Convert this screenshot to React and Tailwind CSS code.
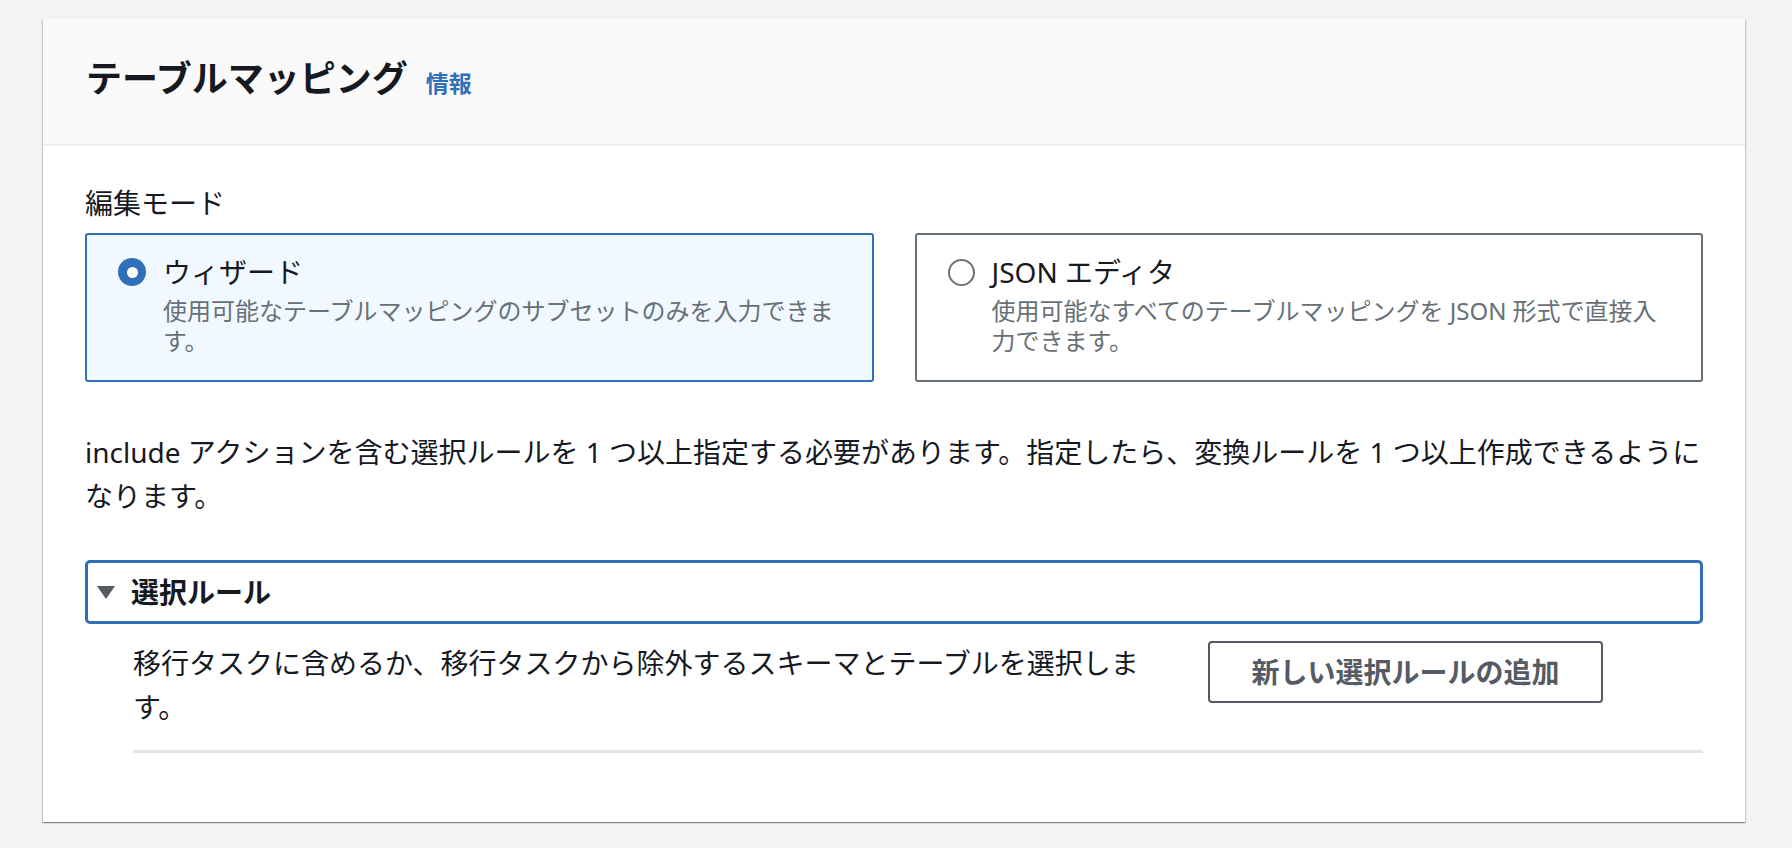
import { useState } from 'react'

const font = { fontFamily: '"Noto Sans", "Noto Sans CJK JP", sans-serif' }

function RadioDot({ checked }) {
  return checked ? (
    <span className="flex h-[28px] w-[28px] shrink-0 items-center justify-center rounded-full bg-[#3070b6]">
      <span className="h-[11px] w-[11px] rounded-full bg-white" />
    </span>
  ) : (
    <span className="h-[27px] w-[27px] shrink-0 rounded-full border-2 border-[#687078] bg-white" />
  )
}

function ModeCard({ checked, label, desc, onClick }) {
  return (
    <button
      onClick={onClick}
      className={`flex h-[149px] items-start rounded-[3px] border-2 pl-[31px] pr-[20px] pt-[16px] text-left ${
        checked ? 'border-[#3070b6] bg-[#f1f8ff]' : 'border-[#687078] bg-white'
      }`}
    >
      <span className="flex h-[42px] items-center">
        <RadioDot checked={checked} />
      </span>
      <span className="ml-[17px] flex flex-col">
        <span className="text-[28px] leading-[42px] text-[#16191f]">{label}</span>
        <span className="mt-[3px] text-[24px] leading-[30px] text-[#687078]">{desc}</span>
      </span>
    </button>
  )
}

export default function App() {
  const [mode, setMode] = useState('wizard')
  const [open, setOpen] = useState(true)

  return (
    <div className="min-h-screen bg-[#f2f3f3] pt-[19px]" style={font}>
      <div className="ml-[43px] w-[1702px] bg-white shadow-[0_1px_1px_0_rgba(0,28,36,0.3),1px_1px_1px_0_rgba(0,28,36,0.15),-1px_1px_1px_0_rgba(0,28,36,0.15)]">
        <div className="flex h-[127px] items-baseline border-b-2 border-[#eaeded] bg-[#fafafa] px-[43px] pt-[36px]">
          <h2 className="text-[36px] font-bold leading-[48px] text-[#16191f]">テーブルマッピング</h2>
          <a href="#" className="ml-[18px] text-[23px] font-bold text-[#3070b6]">情報</a>
        </div>

        <div className="px-[42px] pb-[69px] pt-[35px]">
          <div className="text-[28px] leading-[44px] text-[#16191f]">編集モード</div>
          <div className="mt-[8px] grid grid-cols-2 gap-[41px]">
            <ModeCard
              checked={mode === 'wizard'}
              onClick={() => setMode('wizard')}
              label="ウィザード"
              desc={<>使用可能なテーブルマッピングのサブセットのみを入力できま<br />す。</>}
            />
            <ModeCard
              checked={mode === 'json'}
              onClick={() => setMode('json')}
              label="JSON エディタ"
              desc={<>使用可能なすべてのテーブルマッピングを JSON 形式で直接入<br />力できます。</>}
            />
          </div>

          <p className="mt-[48px] text-[28px] leading-[44px] text-[#16191f]">
            include アクションを含む選択ルールを 1 つ以上指定する必要があります。指定したら、変換ルールを 1 つ以上作成できるように
            <br />
            なります。
          </p>

          <button
            onClick={() => setOpen(!open)}
            className="mt-[42px] flex h-[64px] w-full items-center rounded-[5px] border-[3px] border-[#3070b6] pl-[8px] text-left"
          >
            <svg width="20" height="15" viewBox="0 0 20 15" className={open ? '' : '-rotate-90'}>
              <path d="M1 1h18L10 14z" fill="#545b64" />
            </svg>
            <span className="ml-[15px] text-[28px] font-bold text-[#16191f]">選択ルール</span>
          </button>

          {open && (
            <div className="pl-[48px]">
              <div className="mt-[17px] flex items-start">
                <p className="w-[1035px] text-[28px] leading-[44px] text-[#16191f]">
                  移行タスクに含めるか、移行タスクから除外するスキーマとテーブルを選択します。
                </p>
                <button className="ml-[40px] h-[62px] w-[395px] rounded-[4px] border-2 border-[#545b64] bg-white text-[28px] font-bold text-[#545b64]">
                  新しい選択ルールの追加
                </button>
              </div>
              <div className="mt-[21px] h-[3px] bg-[#e4e6e6]" />
            </div>
          )}
        </div>
      </div>
    </div>
  )
}
